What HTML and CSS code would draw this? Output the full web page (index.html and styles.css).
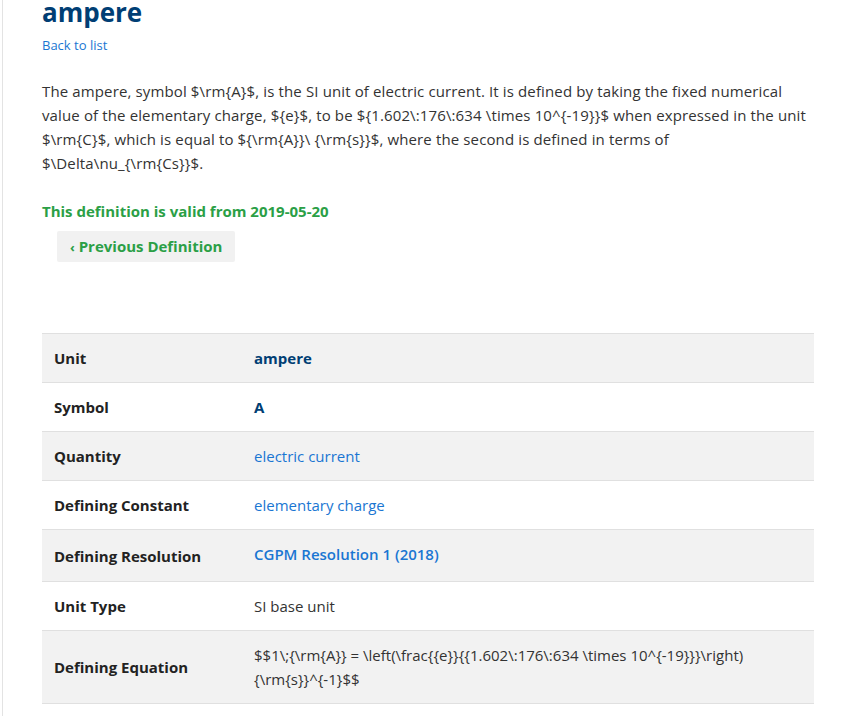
FILE: index.html
```html
<!DOCTYPE html>
<html>
<head>
<meta charset="utf-8">
<link rel="stylesheet" href="styles.css">
</head>
<body>
<div class="page">
  <h1 class="title">ampere</h1>
  <a class="back" href="#">Back to list</a>
  <p class="desc">The ampere, symbol $\rm{A}$, is the SI unit of electric current. It is defined by taking the fixed numerical value of the elementary charge, ${e}$, to be ${1.602\:176\:634 \times 10^{-19}}$ when expressed in the unit $\rm{C}$, which is equal to ${\rm{A}}\ {\rm{s}}$, where the second is defined in terms of $\Delta\nu_{\rm{Cs}}$.</p>
  <div class="valid">This definition is valid from 2019-05-20</div>
  <div class="nav">
    <a class="prev" href="#"><span class="chev">‹</span> Previous Definition</a>
  </div>
  <table class="info">
    <tr class="odd"><th>Unit</th><td class="strong">ampere</td></tr>
    <tr><th>Symbol</th><td class="strong">A</td></tr>
    <tr class="odd"><th>Quantity</th><td><a href="#">electric current</a></td></tr>
    <tr><th>Defining Constant</th><td><a href="#">elementary charge</a></td></tr>
    <tr class="odd"><th>Defining Resolution</th><td class="res"><a href="#">CGPM Resolution 1 (2018)</a></td></tr>
    <tr><th>Unit Type</th><td>SI base unit</td></tr>
    <tr class="odd"><th>Defining Equation</th><td>$$1\;{\rm{A}} = \left(\frac{{e}}{{1.602\:176\:634 \times 10^{-19}}}\right) {\rm{s}}^{-1}$$</td></tr>
  </table>
</div>
</body>
</html>
```
FILE: styles.css
```css
html, body {
  margin: 0;
  padding: 0;
  background: #fff;
}
body {
  font-family: "Open Sans", "Noto Sans", sans-serif;
  color: #333;
  font-size: 15px;
}
.page {
  margin-left: 2px;
  border-left: 1px solid #e3e3e3;
  padding-left: 39px;
  width: 772px;
  min-height: 722px;
}
.title {
  margin: -6px 0 0 0;
  font-size: 26px;
  line-height: 36px;
  font-weight: 700;
  color: #003e74;
}
.back {
  display: block;
  margin-top: 5px;
  font-size: 13px;
  line-height: 20px;
  color: #1a76d2;
  text-decoration: none;
}
.desc {
  margin: 24px 0 0 0;
  line-height: 24px;
  font-size: 15px;
  letter-spacing: 0.13px;
}
.valid {
  margin-top: 24px;
  font-weight: 700;
  color: #2b9f46;
  line-height: 24px;
}
.nav {
  margin-top: 8px;
  padding-left: 15px;
}
.prev {
  display: inline-block;
  background: #f1f1f1;
  color: #2b9f46;
  font-weight: 700;
  text-decoration: none;
  padding: 3px 13px;
  line-height: 24px;
  border-radius: 2px;
}
.chev {
  font-size: 13px;
}
.info {
  margin-top: 71px;
  width: 772px;
  border-collapse: collapse;
  border-top: 1px solid #e0e0e0;
}
.info tr {
  border-bottom: 1px solid #e0e0e0;
}
.info tr.odd {
  background: #f2f2f2;
}
.info th {
  text-align: left;
  font-weight: 700;
  color: #222;
  width: 188px;
  padding: 12px 12px;
  line-height: 24px;
  vertical-align: middle;
}
.info td {
  padding: 12px 12px 12px 0;
  line-height: 24px;
  vertical-align: middle;
}
.info td.strong {
  font-weight: 700;
  color: #003e74;
}
.info td.res {
  padding-top: 12px;
  padding-bottom: 15px;
}
.info td.eq {
  padding-top: 11px;
  padding-bottom: 11px;
}
.info a {
  color: #1a76d2;
  text-decoration: none;
}
.info td.res a {
  font-weight: 600;
}
```
